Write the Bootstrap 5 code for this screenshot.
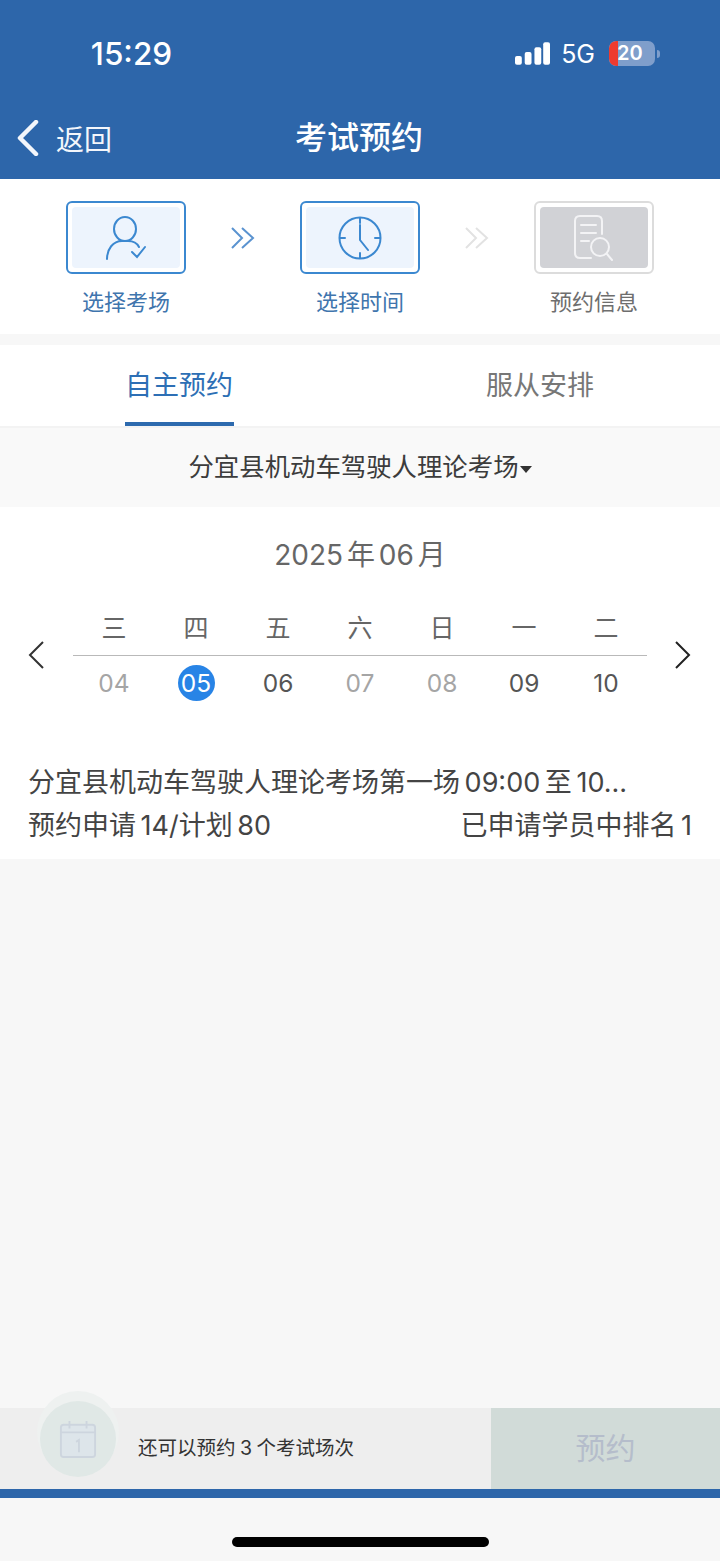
<!DOCTYPE html>
<html lang="zh"><head><meta charset="utf-8">
<link href="https://cdn.jsdelivr.net/npm/bootstrap@5.3.0/dist/css/bootstrap.min.css" rel="stylesheet">
<style>
html,body{height:1561px;margin:0;overflow:hidden}
body{font-family:Inter,"Noto Sans CJK SC",sans-serif;background:#f7f7f7;color:#444;display:flex;flex-direction:column}
.hdr{height:179px;background:#2d66aa;color:#fff;position:relative}
.sb{height:107px;padding:0 60px 0 90px}
.clock{font-size:31.5px;font-weight:500;line-height:38px;width:83px;text-align:center}
.net{font-size:25px;line-height:38px;margin-left:11px}
.batt{width:46px;height:25px;border-radius:7px;background:#7f9ecb;margin-left:14px;overflow:hidden;font-size:20px;font-weight:600;line-height:25px;padding-left:8px;position:relative}
.batt::before{content:"";position:absolute;left:0;top:0;bottom:0;width:9px;background:#ee3b2f;border-radius:7px 0 0 7px}
.nib{width:3px;height:8px;background:#7f9ecb;border-radius:0 3px 3px 0;margin-left:2px}
.nv{height:62px;position:relative}
.back{position:absolute;left:16px;top:0;height:62px;font-size:28px;color:#f3f6fb;gap:17px}
.back span{padding-top:4px}
.ttl{font-size:32px;font-weight:500;line-height:62px;text-align:center;padding-right:2px}
.steps{height:155px;background:#fff;padding:22px 66px 0;justify-content:space-between}
.stp{width:120px;text-align:center;font-size:22px;line-height:30px;color:#3f75ad}
.stp.off{color:#6e6e6e}
.box{height:73px;border:2px solid #3b88d0;border-radius:6px;padding:4px;margin-bottom:13px}
.box>div{height:100%;background:#edf4fd;border-radius:4px}
.off .box{border-color:#dcdcdc}
.off .box>div{background:#d1d2d6}
.arr{margin-top:23px;width:26px}
.tabs{height:83px;background:#fff;margin-top:11px;border-bottom:2px solid #f3f3f3;font-size:27px}
.tb{width:360px;text-align:center;line-height:81px;color:#777;position:relative}
.tb.on{color:#2d6fb5;padding-right:2px}
.tb.on::after{content:"";position:absolute;left:125px;width:109px;height:4px;bottom:0;background:#2d6aae}
.sel{height:79px;background:#f9f9f9;font-size:25.4px;color:#3c3c3c;line-height:78px;text-align:center}
.car{display:inline-block;border:6px solid transparent;border-top:7px solid #333;border-bottom:0;vertical-align:middle;margin-left:1px}
.cal{background:#fff;height:352px}
.ym{font-size:28px;color:#666;line-height:40px;padding-top:28px;text-align:center;word-spacing:-4px}
.wk{margin-top:32px;position:relative;padding:0 73px}
.wk .chev{position:absolute;top:34px}
.cells{display:grid;grid-template-columns:repeat(7,1fr)}
.hd{font-size:25px;color:#666;text-align:center;height:49px;line-height:42px;border-bottom:1px solid #b9b9b9}
.dy{font-size:24.5px;text-align:center;color:#555;line-height:36px;margin-top:9px}
.dy.dim{color:#a5a5a5}
.dy span{display:inline-block;width:37px;height:36px;border-radius:50%}
.dy.cur span{background:#2884e6;color:#fff}
.info{padding:0 28px;margin-top:60px;font-size:27px;line-height:43px;color:#444;word-spacing:-3px;white-space:nowrap}
.grow{flex:1}
.ftr{height:81px;background:#eeeeee;position:relative}
.cir{position:absolute;left:40px;top:-7px;width:76px;height:76px;border-radius:50%;background:#e0e8e6;box-shadow:0 -7px 0 3px #eef1f0}
.msg{margin-left:138px;font-size:19.5px;line-height:81px;color:#333;word-spacing:-1px}
.go{width:229px;background:#d1dbd8;color:#b5bdcb;font-size:30px;text-align:center;line-height:81px}
.bluebar{height:9px;background:#2d66aa}
.homezone{height:63px}
.home{width:257px;height:10px;background:#000;border-radius:5px;margin-top:39px}
</style></head><body>
<div class="hdr">
 <div class="sb d-flex align-items-center justify-content-between">
  <div class="clock">15:29</div>
  <div class="d-flex align-items-center">
   <svg width="35" height="24" viewBox="0 0 36 24" fill="#fff"><rect x="0" y="14" width="7" height="9" rx="2"/><rect x="10" y="10" width="7" height="13" rx="2"/><rect x="20" y="5" width="7" height="18" rx="2"/><rect x="29" y="0" width="7" height="23" rx="2"/></svg>
   <div class="net">5G</div>
   <div class="batt">20</div><div class="nib"></div>
  </div>
 </div>
 <div class="nv">
  <div class="back d-flex align-items-center">
   <svg width="23" height="36" viewBox="0 0 23 36" fill="none" stroke="#f3f6fb" stroke-width="4.5" stroke-linecap="round" stroke-linejoin="round"><path d="M20 2 4 18l16 16"/></svg>
   <span>返回</span>
  </div>
  <div class="ttl">考试预约</div>
 </div>
</div>
<div class="steps d-flex">
 <div class="stp"><div class="box"><div class="d-flex align-items-center justify-content-center">
  <svg width="42" height="44" viewBox="0 0 42 44" fill="none" stroke="#3b88d0" stroke-width="2" stroke-linecap="round"><ellipse cx="20" cy="13" rx="11" ry="12"/><path d="M2 43c0-10 6-18 15-18h6c5 0 9 2 11 6"/><path d="M27 36l5 5 8-10"/></svg>
 </div></div>选择考场</div>
 <div class="arr"><svg width="26" height="26" viewBox="0 0 26 26" fill="none" stroke="#5a93d0" stroke-width="2"><path d="M2 3l10 10L2 23M12 3l11 10-11 10"/></svg></div>
 <div class="stp"><div class="box"><div class="d-flex align-items-center justify-content-center">
  <svg width="44" height="44" viewBox="0 0 44 44" fill="none" stroke="#3b88d0" stroke-width="2" stroke-linecap="round"><circle cx="22" cy="22" r="20.5"/><path d="M22 2v5M22 37v5M2 22h5M37 22h5M22 9v15l8 10"/></svg>
 </div></div>选择时间</div>
 <div class="arr"><svg width="26" height="26" viewBox="0 0 26 26" fill="none" stroke="#e2e2e2" stroke-width="2"><path d="M2 3l10 10L2 23M12 3l11 10-11 10"/></svg></div>
 <div class="stp off"><div class="box"><div class="d-flex align-items-center justify-content-center">
  <svg width="44" height="48" viewBox="0 0 44 48" fill="none" stroke="#f3f3f5" stroke-width="2" stroke-linecap="round"><path d="M19 44H8c-3 0-5-2-5-5V7c0-3 2-5 5-5h17c3 0 5 2 5 5v13"/><path d="M9 11h15M9 19h15M9 27h8"/><circle cx="28" cy="33" r="9"/><path d="M35 40l5 6"/></svg>
 </div></div>预约信息</div>
</div>
<div class="tabs d-flex"><div class="tb on">自主预约</div><div class="tb">服从安排</div></div>
<div class="sel">分宜县机动车驾驶人理论考场<span class="car"></span></div>
<div class="cal">
 <div class="ym">2025 年 06 月</div>
 <div class="wk">
  <svg class="chev" style="left:28px" width="17" height="28" viewBox="0 0 17 28" fill="none" stroke="#333" stroke-width="2"><path d="M15 1 2 14l13 13"/></svg>
  <svg class="chev" style="right:29px" width="17" height="28" viewBox="0 0 17 28" fill="none" stroke="#222" stroke-width="2"><path d="M2 1l13 13L2 27"/></svg>
  <div class="cells">
   <div class="hd">三</div><div class="hd">四</div><div class="hd">五</div><div class="hd">六</div><div class="hd">日</div><div class="hd">一</div><div class="hd">二</div>
   <div class="dy dim"><span>04</span></div><div class="dy cur"><span>05</span></div><div class="dy"><span>06</span></div><div class="dy dim"><span>07</span></div><div class="dy dim"><span>08</span></div><div class="dy"><span>09</span></div><div class="dy"><span>10</span></div>
  </div>
 </div>
 <div class="info">
  <div>分宜县机动车驾驶人理论考场第一场 09:00 至 10...</div>
  <div class="d-flex justify-content-between"><span>预约申请 14/计划 80</span><span>已申请学员中排名 1</span></div>
 </div>
</div>
<div class="grow"></div>
<div class="ftr d-flex justify-content-between">
 <div class="cir d-flex align-items-center justify-content-center">
  <svg width="38" height="38" viewBox="0 0 40 40" fill="none" stroke="#cdd5de" stroke-width="2"><rect x="2" y="5" width="36" height="34" rx="3" fill="#dde5ea"/><path d="M2 13h36M11 1v8M29 1v8"/><path d="M18 23l3-2v13"/></svg>
 </div>
 <div class="msg">还可以预约 3 个考试场次</div>
 <div class="go">预约</div>
</div>
<div class="bluebar"></div>
<div class="homezone d-flex justify-content-center"><div class="home"></div></div>
</body></html>
